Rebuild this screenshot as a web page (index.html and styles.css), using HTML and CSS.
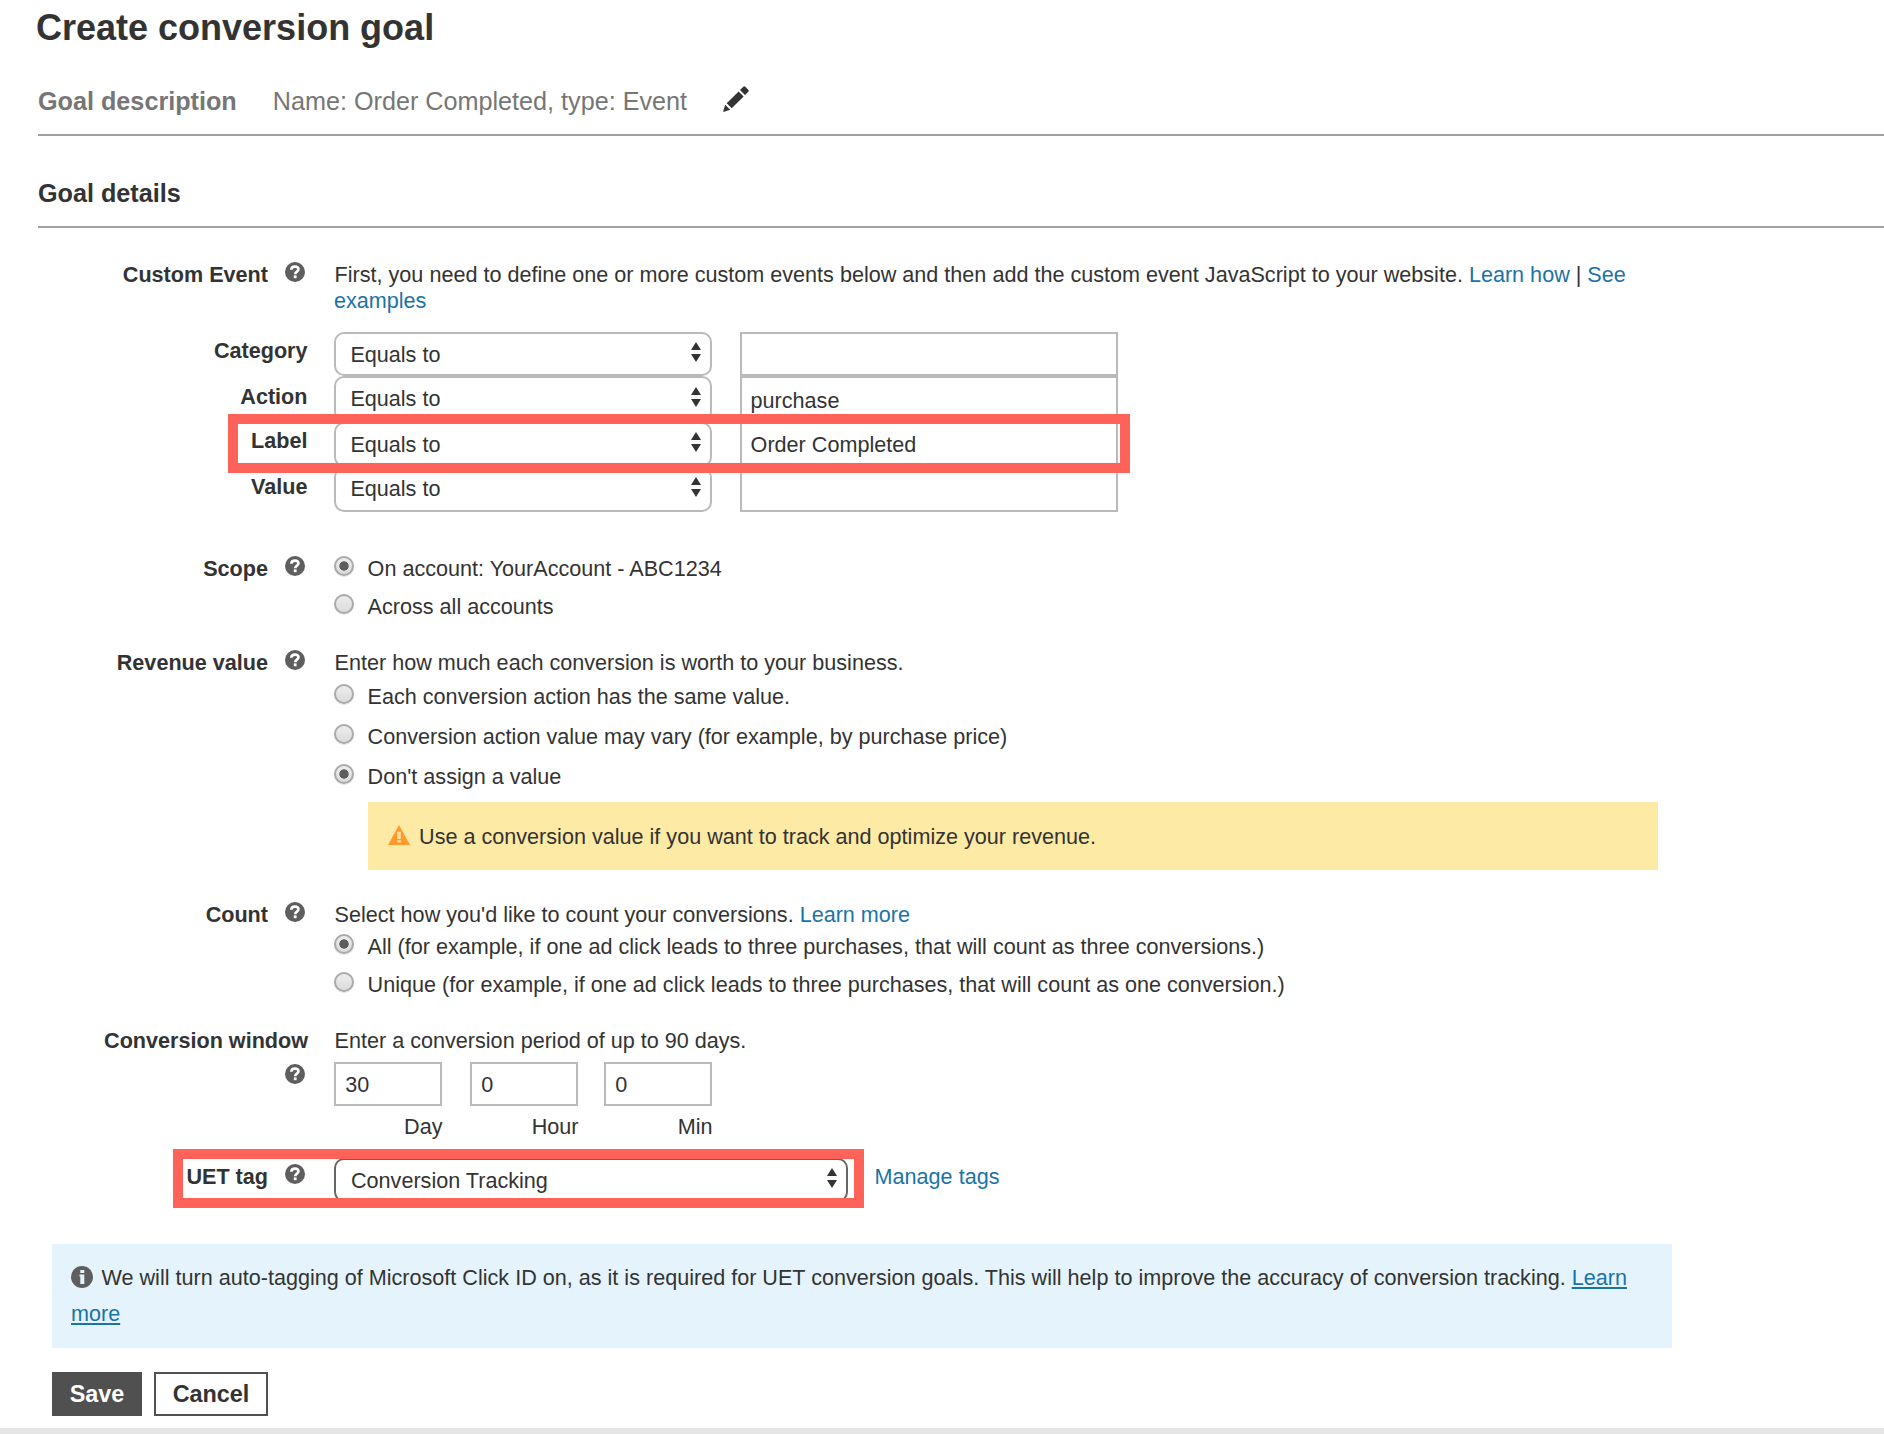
FILE: index.html
```html
<!DOCTYPE html>
<html lang="en">
<head>
<meta charset="utf-8">
<title>Create conversion goal</title>
<link rel="stylesheet" href="styles.css">
</head>
<body>
<svg class="defs" aria-hidden="true">
  <symbol id="help" viewBox="0 0 20 20">
    <circle cx="10" cy="10" r="10" fill="#5e5e5e"/>
    <path d="M6.300 7.700C6.400 5.600 7.900 4.600 10 4.600c2.200 0 3.500 1 3.500 2.700 0 2.400-3.300 2.300-3.300 5" fill="none" stroke="#fff" stroke-width="2.600"/>
    <rect x="8.800" y="13.400" width="2.800" height="2.800" fill="#fff"/>
  </symbol>
  <symbol id="arrows" viewBox="0 0 10 20">
    <path d="M5 0l5 8H0zM0 12h10l-5 8z" fill="#333"/>
  </symbol>
</svg>
<main class="page">
  <h1 class="title">Create conversion goal</h1>
  <section class="summary">
    <h2 class="summary-title">Goal description</h2>
    <span class="summary-text">Name: Order Completed, type: Event</span>
    <svg class="pencil" viewBox="0 0 26 26"><path d="M0 26L2.200 18.800 7.200 23.800zM3.700 17.300L15.600 5.400l5 5L8.700 22.300zM17 4L20.300.7Q21.300-.2 22.300.8L25.200 3.700Q26.200 4.700 25.300 5.700L22 9z" fill="#333"/></svg>
  </section>
  <h2 class="section-title">Goal details</h2>

  <form class="form">
    <div class="field">
      <div class="label">Custom Event <svg class="help"><use href="#help"/></svg></div>
      <div class="body">First, you need to define one or more custom events below and then add the custom event JavaScript to your website. <a href="#">Learn how</a> | <a href="#">See examples</a></div>
    </div>

    <div class="rules">
      <div class="rule-label">Category</div>
      <div class="select">Equals to<svg class="arrows"><use href="#arrows"/></svg></div>
      <div class="input"></div>
      <div class="rule-label low">Action</div>
      <div class="select second">Equals to<svg class="arrows"><use href="#arrows"/></svg></div>
      <div class="input lower">purchase</div>
      <div class="rule-label">Label</div>
      <div class="select">Equals to<svg class="arrows"><use href="#arrows"/></svg></div>
      <div class="input">Order Completed</div>
      <div class="rule-label last">Value</div>
      <div class="select last">Equals to<svg class="arrows"><use href="#arrows"/></svg></div>
      <div class="input"></div>
      <div class="highlight highlight-rule"></div>
    </div>

    <div class="field scope">
      <div class="label">Scope <svg class="help"><use href="#help"/></svg></div>
      <div class="body">
        <div class="option"><span class="radio on"></span>On account: YourAccount - ABC1234</div>
        <div class="option"><span class="radio"></span>Across all accounts</div>
      </div>
    </div>

    <div class="field revenue">
      <div class="label">Revenue value <svg class="help"><use href="#help"/></svg></div>
      <div class="body">
        <p class="lead">Enter how much each conversion is worth to your business.</p>
        <div class="option tall first"><span class="radio"></span>Each conversion action has the same value.</div>
        <div class="option tall"><span class="radio"></span>Conversion action value may vary (for example, by purchase price)</div>
        <div class="option"><span class="radio on"></span>Don't assign a value</div>
        <div class="warning"><svg class="warning-icon" viewBox="0 0 22 20"><path d="M11 0l11 20H0z" fill="#ff9a2b"/><path d="M9.200 6.800h3.600v7.200H9.200zM9.200 15.300h3.600v2.200H9.200z" fill="#fddf98"/></svg>Use a conversion value if you want to track and optimize your revenue.</div>
      </div>
    </div>

    <div class="field count">
      <div class="label">Count <svg class="help"><use href="#help"/></svg></div>
      <div class="body">
        <p class="lead">Select how you'd like to count your conversions. <a href="#">Learn more</a></p>
        <div class="option near"><span class="radio on"></span>All (for example, if one ad click leads to three purchases, that will count as three conversions.)</div>
        <div class="option"><span class="radio"></span>Unique (for example, if one ad click leads to three purchases, that will count as one conversion.)</div>
      </div>
    </div>

    <div class="field window">
      <div class="label stacked"><span>Conversion window</span> <svg class="help"><use href="#help"/></svg></div>
      <div class="body">
        <p class="lead">Enter a conversion period of up to 90 days.</p>
        <div class="period">
          <div class="unit"><div class="input">30</div><span class="unit-name">Day</span></div>
          <div class="unit"><div class="input">0</div><span class="unit-name">Hour</span></div>
          <div class="unit"><div class="input">0</div><span class="unit-name">Min</span></div>
        </div>
      </div>
    </div>

    <div class="field tag">
      <div class="label">UET tag <svg class="help"><use href="#help"/></svg></div>
      <div class="body tag-body">
        <div class="select select-dark">Conversion Tracking<svg class="arrows"><use href="#arrows"/></svg></div>
        <a class="manage" href="#">Manage tags</a>
      </div>
      <div class="highlight highlight-tag"></div>
    </div>
  </form>

  <div class="notice"><svg class="info" viewBox="0 0 22 22"><circle cx="11" cy="11" r="11" fill="#5e5e5e"/><path d="M9.300 4h4v3h-4zM8.500 8.500h4.800V18H9.300v-7.500h-.8z" fill="#e5f4fc"/></svg>We will turn auto-tagging of Microsoft Click ID on, as it is required for UET conversion goals. This will help to improve the accuracy of conversion tracking. <a href="#">Learn more</a></div>
  <div class="buttons">
    <button class="button primary" type="button">Save</button>
    <button class="button" type="button">Cancel</button>
  </div>
</main>
<footer class="footer"></footer>
</body>
</html>
```
FILE: styles.css
```css
* { box-sizing: border-box; }
body {
  margin: 0;
  height: 1434px;
  display: flex;
  flex-direction: column;
  justify-content: space-between;
  overflow: hidden;
  background: #fff;
  color: #333;
  font: 21.6px/26px "Liberation Sans", Arial, sans-serif;
}
h1, h2, p { margin: 0; }
a { color: #1a73a7; text-decoration: none; }
.defs { position: absolute; width: 0; height: 0; }
.title { padding: 7px 0 0 36px; font-size: 36px; line-height: 42px; }
.summary {
  display: flex;
  align-items: flex-start;
  margin: 37px 0 0 38px;
  height: 50px;
  border-bottom: 2px solid #a1a1a1;
  color: #767676;
  font-size: 25.2px;
  line-height: 30px;
}
.summary-title { font-size: 25.2px; margin-right: 36px; }
.pencil { width: 26px; height: 26px; margin: 0 0 0 36px; }
.section-title {
  margin: 42px 0 0 38px;
  height: 50px;
  border-bottom: 2px solid #a1a1a1;
  font-size: 25.2px;
  line-height: 30px;
}
.form { padding-top: 34px; }
.field {
  position: relative;
  display: grid;
  grid-template-columns: 308px 1324px;
  column-gap: 26px;
}
.label {
  display: flex;
  justify-content: flex-end;
  align-items: flex-start;
  gap: 17px;
  padding-right: 3px;
  font-weight: bold;
}
.field > .body { text-indent: .6px; }
.help { width: 20px; height: 20px; margin-top: .4px; }
.stacked { flex-direction: column; justify-content: flex-start; align-items: flex-end; gap: 10px; }
.stacked span { margin-right: -3px; }
.rules {
  position: relative;
  display: grid;
  grid-template-columns: 308px 378px 378px;
  grid-template-rows: 44px 46px 45px 45px;
  column-gap: 26px;
  margin-top: 18px;
}
.rules .input { margin-left: 2px; margin-right: -2px; }
.rule-label { padding-top: 6px; padding-right: .5px; text-align: right; font-weight: bold; }
.rule-label.low { padding-top: 8px; }
.rule-label.last { padding-top: 7px; }
.select {
  display: flex;
  justify-content: space-between;
  align-items: flex-start;
  padding: 8px 9px 0 14.400px;
  border: 2px solid #bababa;
  border-radius: 10px;
}
.select.last { padding-top: 7px; }
.arrows { width: 10px; height: 20px; }
.select.second .arrows { margin-top: 1px; }
.select.last .arrows { margin-top: 1px; }
.input { height: 100%; padding: 8px 8.600px 0; border: 2px solid #bababa; }
.input.lower { padding-top: 10px; }
.highlight { position: absolute; border: 10px solid #fe6258; pointer-events: none; }
.highlight-rule { left: 228px; top: 82px; width: 902px; height: 59px; }
.highlight-tag { left: 173px; top: -15px; width: 691px; height: 59px; }
.scope { margin-top: 44px; }
.option { display: flex; align-items: flex-start; gap: 13px; height: 38px; }
.option.tall { height: 40px; }
.option.first { margin-top: 8px; }
.option.near { margin-top: 6px; }
.radio {
  width: 20px;
  height: 20px;
  border: 2px solid #a9a9a9;
  border-radius: 50%;
  background: linear-gradient(#ececec, #dcdcdc);
  box-shadow: 0 1px 1px #e4e4e4;
}
.radio.on { background: radial-gradient(circle, #5c5c5c 4.300px, transparent 5px), linear-gradient(#ececec, #dcdcdc); }
.revenue { margin-top: 18px; }
.warning {
  display: flex;
  align-items: flex-start;
  height: 68px;
  margin-left: 34px;
  padding: 22px 19.500px 0;
  background: #fdeaa5;
}
.warning-icon { width: 22px; height: 20px; margin: 1px 9px 0 0; }
.count { margin-top: 32px; }
.window { margin-top: 18px; }
.period { display: flex; margin-top: 8px; gap: 28px; }
.unit { width: 108px; text-align: right; }
.unit:last-child { margin-left: -2px; }
.unit .input { height: 44px; text-align: left; }
.unit-name { display: block; margin: 8px -.5px 0 0; }
.tag { margin-top: 24px; }
.tag-body { display: flex; gap: 26px; }
.select-dark { width: 514px; height: 44px; margin-top: -6px; border-color: #666; }
.notice {
  width: 1620px;
  height: 104px;
  margin: 42px 0 0 52px;
  padding: 16px 40px 0 19px;
  background: #e5f4fc;
  line-height: 36px;
}
.notice a { text-decoration: underline; text-decoration-thickness: 2px; text-underline-offset: 2px; }
.info { width: 22px; height: 22px; margin-right: 8.500px; vertical-align: -3px; }
.buttons { display: flex; gap: 12px; margin: 24px 0 0 52px; }
.button {
  height: 44px;
  width: 114px;
  padding: 0;
  border: 2px solid #505050;
  background: #fff;
  color: #333;
  font: bold 23.4px/38px "Liberation Sans", Arial, sans-serif;
}
.button.primary { width: 90px; background: #505050; color: #fff; }
.footer { height: 6px; background: #e5e5e5; }
```
